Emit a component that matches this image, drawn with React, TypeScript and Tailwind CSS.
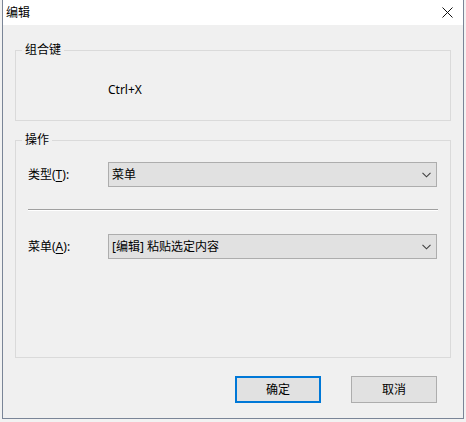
import React from 'react';

const font = "font-['Noto_Sans','Noto_Sans_CJK_SC',sans-serif]";

const Chevron = () => (
  <svg width="9" height="6" viewBox="0 0 9 6" className="shrink-0">
    <polyline points="0.5,0.8 4.5,4.8 8.5,0.8" fill="none" stroke="#404040" strokeWidth="1.1" />
  </svg>
);

const Combo = ({ value }: { value: string }) => (
  <div className="flex items-center justify-between w-[329px] h-[25px] bg-[#e1e1e1] border border-[#adadad] pl-[3px] pr-[5px]">
    <span className="text-[12px] leading-[16px] text-black">{value}</span>
    <Chevron />
  </div>
);

const GroupBox = ({ title, className, children }: { title: string; className: string; children?: React.ReactNode }) => (
  <div className={`relative border border-[#dadada] ${className}`}>
    <span className="absolute -top-[9px] left-[6px] px-[3px] bg-[#f0f0f0] text-[12px] leading-[16px] text-black">
      {title}
    </span>
    {children}
  </div>
);

export default function App() {
  return (
    <div className={`w-[466px] h-[422px] bg-[#f2f2f2] pl-[2px] ${font}`}>
      <div className="w-[462px] h-[419px] border-x border-b border-[#7a8597] flex flex-col bg-[#f0f0f0]">
        {/* title bar */}
        <div className="h-[25px] bg-white flex items-center justify-between pl-[3px] pr-[10px]">
          <span className="text-[12px] leading-[16px] text-black">编辑</span>
          <svg width="11" height="11" viewBox="0 0 11 11">
            <path d="M0.5 0.5 L10.5 10.5 M10.5 0.5 L0.5 10.5" stroke="#111" strokeWidth="1" />
          </svg>
        </div>

        <div className="flex flex-col px-[12px]">
          <GroupBox title="组合键" className="mt-[25px] h-[71px]">
            <div className="pt-[31px] pl-[92px] text-[12px] leading-[16px] text-black">Ctrl+X</div>
          </GroupBox>

          <GroupBox title="操作" className="mt-[19px] h-[218px]">
            <div className="flex flex-col pt-[21px] px-[12px]">
              <div className="flex items-center">
                <span className="w-[80px] text-[12px] leading-[16px] text-black">
                  类型(<span className="underline underline-offset-2">T</span>):
                </span>
                <Combo value="菜单" />
              </div>
              <div className="mt-[22px] h-[2px] border-t border-[#a0a0a0] border-b border-b-white" />
              <div className="flex items-center mt-[23px]">
                <span className="w-[80px] text-[12px] leading-[16px] text-black">
                  菜单(<span className="underline underline-offset-2">A</span>):
                </span>
                <Combo value="[编辑] 粘贴选定内容" />
              </div>
            </div>
          </GroupBox>
        </div>

        <div className="flex justify-end gap-[30px] mt-[18px] pr-[26px]">
          <button className="w-[86px] h-[27px] bg-[#e1e1e1] border-2 border-[#0078d7] text-[12px] leading-[16px] text-black">
            确定
          </button>
          <button className="w-[86px] h-[27px] bg-[#e1e1e1] border border-[#adadad] text-[12px] leading-[16px] text-black">
            取消
          </button>
        </div>
      </div>
    </div>
  );
}
